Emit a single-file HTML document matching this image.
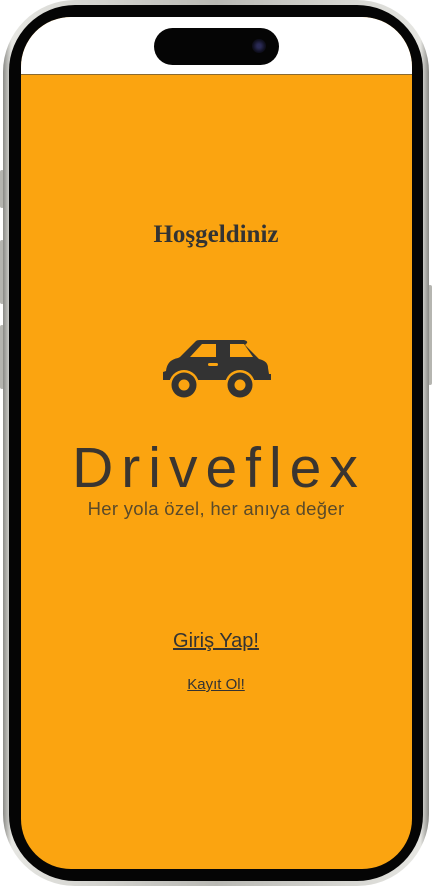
<!DOCTYPE html>
<html><head><meta charset="utf-8"><style>
html,body{margin:0;padding:0;background:#fff;}
body{width:432px;height:886px;position:relative;overflow:hidden;font-family:"Liberation Sans",sans-serif;}
.frame{position:absolute;left:3px;top:0;width:426px;height:886px;border-radius:72px;background:linear-gradient(90deg,#8a8a86,#e6e6e2 2%,#b9b9b4 50%,#e6e6e2 98%,#8a8a86);}
.bezel{position:absolute;left:6px;top:5px;right:6px;bottom:5px;border-radius:66px;background:#050505;}
.screen{position:absolute;left:21px;top:17px;width:391px;height:852px;border-radius:50px;overflow:hidden;background:#fba410;}
.top{position:absolute;left:0;top:0;width:100%;height:57px;background:#fff;border-bottom:1px solid #8a6a30;}
.island{position:absolute;left:154px;top:28px;width:125px;height:37px;border-radius:19px;background:#050505;}
.cam{position:absolute;left:252px;top:39px;width:14px;height:14px;border-radius:50%;background:radial-gradient(circle,#2a2a55 20%,#101020 60%,#050505);}
.btn{position:absolute;width:4px;background:#b5b5b0;border-radius:2px;}
.c{position:absolute;left:0;width:432px;text-align:center;color:#333;}
</style></head><body>
<div class="btn" style="left:0;top:170px;height:38px"></div>
<div class="btn" style="left:0;top:240px;height:64px"></div>
<div class="btn" style="left:0;top:325px;height:64px"></div>
<div class="btn" style="right:0;top:285px;height:100px"></div>
<div class="frame"><div class="bezel"></div></div>
<div class="screen"><div class="top"></div></div>
<div class="island"></div><div class="cam"></div>
<div class="c" style="top:221px;font-family:'Liberation Serif',serif;font-weight:bold;font-size:25px;">Hoşgeldiniz</div>
<svg style="position:absolute;left:0;top:0" width="432" height="886">
<path fill="#333" d="M180 357 L196 341 Q197 340 200 340 L244 340 Q248 341 247 343 L245 345 L259 359 Q268 361 268 368 L269 374 L271 374 L271 380 L163 380 L163 372 L166 371 Q167 360 178 358 Z"/>
<path fill="#fba410" d="M202 344 L216 344 L216 357 L190 357 Z M230 344 L244 344 L253 357 L230 357 Z"/>
<rect x="208" y="363" width="10" height="3" rx="1.5" fill="#fba410"/>
<circle cx="184" cy="385" r="15" fill="#fba410"/><circle cx="240" cy="385" r="15" fill="#fba410"/>
<circle cx="184" cy="385" r="12.5" fill="#333"/><circle cx="184" cy="385" r="5.5" fill="#fba410"/>
<circle cx="240" cy="385" r="12.5" fill="#333"/><circle cx="240" cy="385" r="5.5" fill="#fba410"/>
</svg>
<div class="c" style="top:435px;font-size:57px;font-weight:300;letter-spacing:8px;color:#3a3530;padding-left:6px;box-sizing:border-box;">Driveflex</div>
<div class="c" style="top:498px;font-size:18.5px;color:#5a4a2a;letter-spacing:0.3px;">Her yola özel, her anıya değer</div>
<div class="c" style="top:630px;font-size:20px;text-decoration:underline;">Giriş Yap!</div>
<div class="c" style="top:676px;font-size:15px;text-decoration:underline;">Kayıt Ol!</div>
</body></html>
